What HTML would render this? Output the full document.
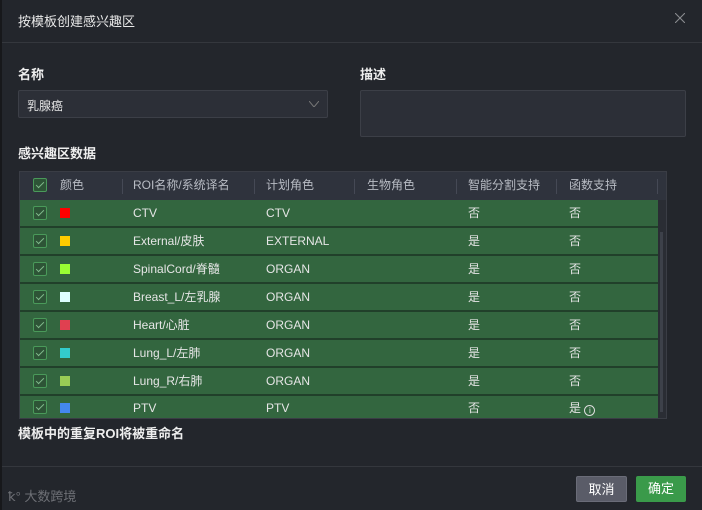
<!DOCTYPE html>
<html><head><meta charset="utf-8"><style>
*{box-sizing:border-box;margin:0;padding:0}
body{width:702px;height:510px;background:#23262c;font-family:"Liberation Sans","Noto Sans CJK SC",sans-serif;color:#e6e6e6;font-size:12px;position:relative;overflow:hidden}
.abs{position:absolute}
.title{left:18px;top:11px;font-size:13px;color:#e8e8e8}
.hr{left:2px;right:0;height:1px;background:#34373d}
.lbl{font-size:13px;font-weight:bold;color:#eee}
.inp{background:#2c2f37;border:1px solid #3c3f47;border-radius:2px}
.row{position:absolute;left:20px;width:638px;height:28px;background:#33663f;border-bottom:2px solid #21402a}
.row span,.hd span{position:absolute;top:6px;line-height:14px;white-space:nowrap}
.hd{position:absolute;left:20px;top:172px;width:646px;height:28px;background:#2f333d;color:#b8bcc4}
.hd i{position:absolute;top:7px;width:1px;height:15px;background:#454955}
.cb{width:14px;height:14px;border:1px solid #4a9a5a;border-radius:2px;position:absolute;left:13px;top:6px;background:#2d5436}
.cb:after{content:"";position:absolute;left:4px;top:1px;width:3px;height:7px;border:solid #7fb88a;border-width:0 1px 1px 0;transform:rotate(45deg)}
.sq{width:10px;height:10px;position:absolute;left:40px;top:8px}
.btn{top:476px;height:26px;width:51px;border-radius:2px;text-align:center;line-height:26px;font-size:13px;color:#fff}
</style></head><body>
<div class="abs" style="left:0;top:0;width:2px;height:510px;background:#17181b"></div>
<div class="abs title">按模板创建感兴趣区</div>
<svg class="abs" style="left:675px;top:13px" width="10" height="10"><path d="M0 0L10 10M10 0L0 10" stroke="#8a8c90" stroke-width="1.1"/></svg>
<div class="abs hr" style="top:42px"></div>
<div class="abs lbl" style="left:18px;top:64px">名称</div>
<div class="abs lbl" style="left:360px;top:64px">描述</div>
<div class="abs inp" style="left:18px;top:90px;width:310px;height:28px"><span style="position:absolute;left:8px;top:6px;font-size:12px">乳腺癌</span><svg style="position:absolute;right:8px;top:10px" width="10" height="6"><path d="M0 0L5 6L10 0" stroke="#777" fill="none"/></svg></div>
<div class="abs inp" style="left:360px;top:90px;width:326px;height:47px"></div>
<div class="abs lbl" style="left:18px;top:143px">感兴趣区数据</div>
<div class="abs" style="left:19px;top:171px;width:648px;height:248px;background:#2a2d34;border:1px solid #3a3d45"></div>
<div class="abs" style="left:660px;top:232px;width:3px;height:180px;background:#3d414a"></div>
<div class="hd"><div class="cb"></div><span style="left:40px">颜色</span><i style="left:102px"></i><span style="left:113px">ROI名称/系统译名</span><i style="left:234px"></i><span style="left:246px">计划角色</span><i style="left:334px"></i><span style="left:347px">生物角色</span><i style="left:436px"></i><span style="left:448px">智能分割支持</span><i style="left:536px"></i><span style="left:549px">函数支持</span><i style="left:637px"></i></div>
<div class="row" style="top:200px"><div class="cb"></div><div class="sq" style="background:#f00"></div><span style="left:113px">CTV</span><span style="left:246px">CTV</span><span style="left:448px">否</span><span style="left:549px">否</span></div>
<div class="row" style="top:228px"><div class="cb"></div><div class="sq" style="background:#fc0"></div><span style="left:113px">External/皮肤</span><span style="left:246px">EXTERNAL</span><span style="left:448px">是</span><span style="left:549px">否</span></div>
<div class="row" style="top:256px"><div class="cb"></div><div class="sq" style="background:#9f3"></div><span style="left:113px">SpinalCord/脊髓</span><span style="left:246px">ORGAN</span><span style="left:448px">是</span><span style="left:549px">否</span></div>
<div class="row" style="top:284px"><div class="cb"></div><div class="sq" style="background:#dff"></div><span style="left:113px">Breast_L/左乳腺</span><span style="left:246px">ORGAN</span><span style="left:448px">是</span><span style="left:549px">否</span></div>
<div class="row" style="top:312px"><div class="cb"></div><div class="sq" style="background:#e04050"></div><span style="left:113px">Heart/心脏</span><span style="left:246px">ORGAN</span><span style="left:448px">是</span><span style="left:549px">否</span></div>
<div class="row" style="top:340px"><div class="cb"></div><div class="sq" style="background:#3cc"></div><span style="left:113px">Lung_L/左肺</span><span style="left:246px">ORGAN</span><span style="left:448px">是</span><span style="left:549px">否</span></div>
<div class="row" style="top:368px"><div class="cb"></div><div class="sq" style="background:#9c5"></div><span style="left:113px">Lung_R/右肺</span><span style="left:246px">ORGAN</span><span style="left:448px">是</span><span style="left:549px">否</span></div>
<div class="row" style="top:396px;height:22px;border-bottom:none"><div class="cb" style="top:4px"></div><div class="sq" style="background:#48e;top:7px"></div><span style="left:113px;top:5px">PTV</span><span style="left:246px;top:5px">PTV</span><span style="left:448px;top:5px">否</span><span style="left:549px;top:5px">是 <b style="display:inline-block;width:11px;height:11px;border:1px solid #ddd;border-radius:50%;font-size:8px;line-height:9px;text-align:center;vertical-align:-1px;font-weight:normal">i</b></span></div>
<div class="abs lbl" style="left:18px;top:423px">模板中的重复ROI将被重命名</div>
<div class="abs hr" style="top:466px"></div>
<div class="abs" style="left:8px;top:486px;color:#6e7076;font-size:13px">ꝁ° 大数跨境</div>
<div class="abs btn" style="left:576px;background:#5a5c68;border:1px solid #6a6c78">取消</div>
<div class="abs btn" style="left:636px;width:50px;background:#3a9a4a">确定</div>
</body></html>
